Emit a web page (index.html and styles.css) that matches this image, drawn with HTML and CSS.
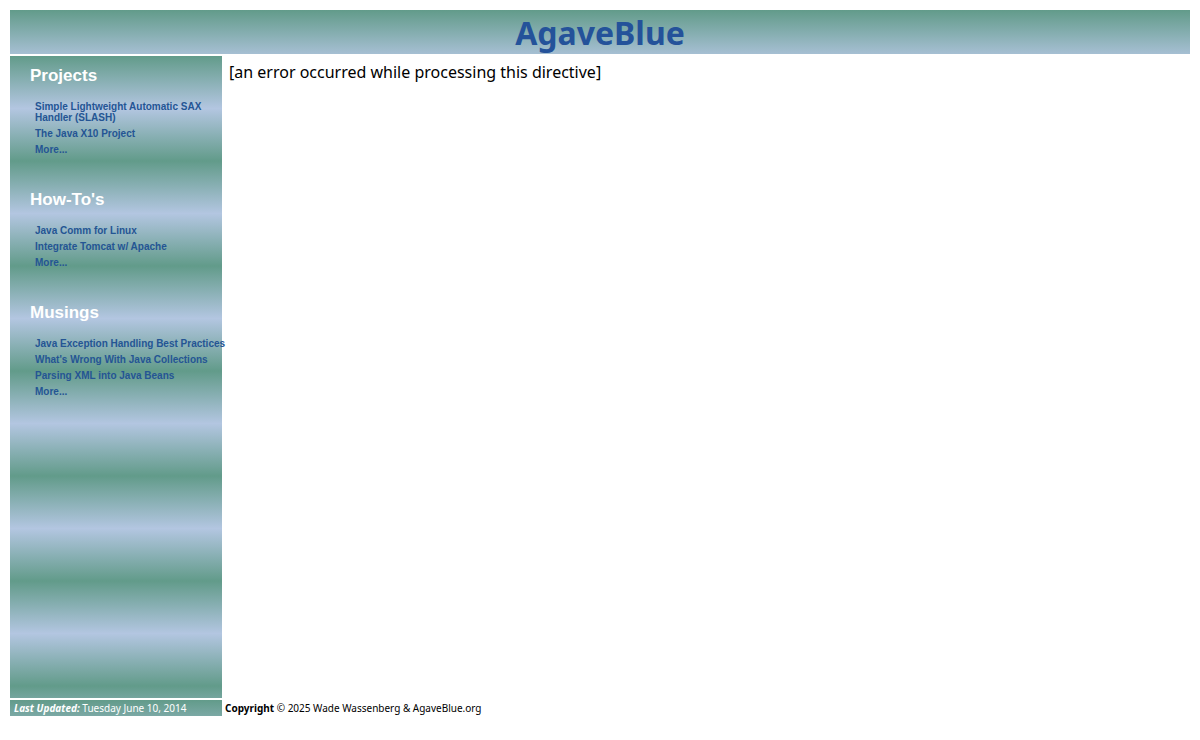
FILE: index.html
```html
<!DOCTYPE html>
<html lang="en">
<head>
    <meta charset="UTF-8">
    <meta name="viewport" content="width=device-width, initial-scale=1.0">
    <title>AgaveBlue</title>
    <link rel="stylesheet" href="styles.css">
</head>
<body>
    <header class="banner">
        <h1>AgaveBlue</h1>
    </header>

    <div class="middle">
        <nav class="sidebar">
            <h2>Projects</h2>
            <ul>
                <li><a href="#">Simple Lightweight Automatic SAX Handler (SLASH)</a></li>
                <li><a href="#">The Java X10 Project</a></li>
                <li><a href="#">More...</a></li>
            </ul>
            <h2>How-To's</h2>
            <ul>
                <li><a href="#">Java Comm for Linux</a></li>
                <li><a href="#">Integrate Tomcat w/ Apache</a></li>
                <li><a href="#">More...</a></li>
            </ul>
            <h2>Musings</h2>
            <ul>
                <li class="nowrap"><a href="#">Java Exception Handling Best Practices</a></li>
                <li><a href="#">What's Wrong With Java Collections</a></li>
                <li><a href="#">Parsing XML into Java Beans</a></li>
                <li><a href="#">More...</a></li>
            </ul>
        </nav>
        <main class="content">[an error occurred while processing this directive]</main>
    </div>

    <footer class="footer">
        <div class="updated"><b><i>Last Updated:</i></b> Tuesday June 10, 2014</div>
        <div class="copyright"><b>Copyright</b> © 2025 Wade Wassenberg &amp; AgaveBlue.org</div>
    </footer>
</body>
</html>
```
FILE: styles.css
```css
* {
    box-sizing: border-box;
}

body {
    display: flex;
    flex-direction: column;
    gap: 2px;
    min-height: 100vh;
    margin: 0;
    padding: 10px 10px 24px;
    background: #fff;
    color: #000;
    font-family: "Segoe UI", "Noto Sans", sans-serif;
    font-size: 16px;
}

/* all coloured bars share the same 105px agave stripe */
.banner, .sidebar, .updated {
    background: linear-gradient(#629b8a, #b3c6e1 50%, #629b8a) 0 0 / 100% 105px;
}

.banner {
    height: 44px;
    text-align: center;
}

h1 {
    margin: 0;
    color: #24529a;
    font-size: 32px;
    line-height: 46px;
}

.middle {
    display: flex;
    flex: 1;
}

.sidebar {
    flex: none;
    width: 212px;
    padding: 10px 10px 20px 20px;
    font-family: Arial, "Liberation Sans", sans-serif;
    font-weight: bold;
}

.sidebar h2 {
    margin: 0 0 15px;
    color: #fff;
    font-size: 17px;
    line-height: 20px;
}

.sidebar ul {
    margin: 0 0 35px;
    padding: 0 0 0 5px;
    list-style: none;
}

.sidebar li {
    margin-bottom: 5px;
    font-size: 10px;
    line-height: 11px;
}

.sidebar a {
    color: #245594;
    text-decoration: none;
}

.sidebar .nowrap {
    white-space: nowrap;
}

.content {
    flex: 1;
    padding: 4px 7px;
    line-height: 24px;
}

.footer {
    display: flex;
    font-size: 10px;
    line-height: 16px;
}

.updated {
    width: 212px;
    padding-left: 4px;
    color: #fff;
}

.copyright {
    padding-left: 3px;
}
```
